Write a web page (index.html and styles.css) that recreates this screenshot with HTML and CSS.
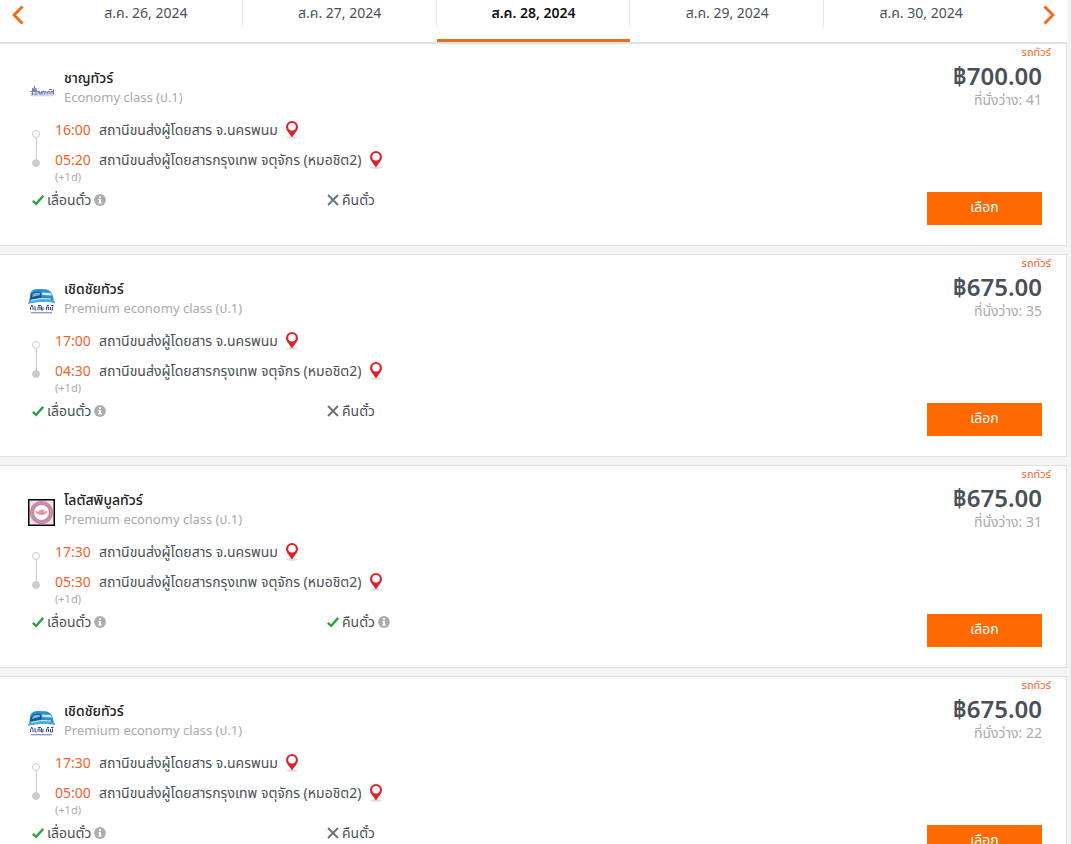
FILE: index.html
```html
<!DOCTYPE html>
<html lang="th">
<head>
<meta charset="utf-8">
<meta name="viewport" content="width=device-width, initial-scale=1">
<title>เที่ยวรถทัวร์</title>
<link rel="stylesheet" href="styles.css">
</head>
<body>
<svg class="sprite" aria-hidden="true">
  <symbol id="pin" viewBox="0 0 14 20">
    <ellipse cx="7" cy="17.500" rx="6" ry="1.500" fill="#e2e2e2"/>
    <path d="M7 1a6 6 0 0 0-6 6c0 3.600 4 7 6 10.500C9 14 13 10.600 13 7a6 6 0 0 0-6-6Z" fill="#de222c"/>
    <circle cx="7" cy="6.800" r="3.800" fill="#fff"/>
  </symbol>
  <symbol id="check" viewBox="0 0 12 12"><path d="M.8 6.800 4.200 9.800 11.200 1.800" fill="none" stroke="#2f9e44" stroke-width="2.300"/></symbol>
  <symbol id="cross" viewBox="0 0 12 12"><path d="M1 1 11 11M11 1 1 11" fill="none" stroke="#6c757d" stroke-width="2"/></symbol>
  <symbol id="info" viewBox="0 0 12 12"><circle cx="6" cy="6" r="5.900" fill="#adadad"/><path d="M5 2.300h2v1.700H5zM4.300 5H7v3.500h.8v1H4.200v-1H5V6h-.7z" fill="#fff"/></symbol>
  <symbol id="logo-charn" viewBox="0 0 27 27">
    <path d="M6.500 7.500 7.300 11l2 3H3.700l2-3Z" fill="#8585c4"/>
    <path d="M2 14.500h8M3 17h6M4.500 11v7M8 11v7" stroke="#7373b8" stroke-width=".9"/>
    <path d="M9.500 17.500 11 14l1 3.500 1.500-3 .5 3v-3h2v3M17 17.500v-3l2 .5v2.500M20 17.500V14l2 1v2.500M23 17.500v-3h2v3M21 12.500h3M25.500 12.500v5" fill="none" stroke="#6161ad" stroke-width=".9"/>
    <path d="M2 18.700h24" stroke="#c3c3e2" stroke-width=".9"/>
  </symbol>
  <symbol id="logo-cherd" viewBox="0 0 27 27">
    <path d="M2 7C2.500 3 5 1.500 9 1l8 .300c5 .700 6.500 3 7.500 6l1.500 5.500L1 15Z" fill="#2b8fcd"/>
    <path d="M3 7.500C4 4 8 3.500 12.500 4l1 5.500L2 11.500Z" fill="#17548f"/>
    <path d="M5 6q3-2 7-1v2L4 9Z" fill="#6fb7df"/>
    <path d="M14 4.500 22.500 5l1.500 2.500-9.500-.500Z" fill="#d0effc"/>
    <path d="M0 14.500q9-5.500 27-1.500v2q-16-3-27 1Z" fill="#45aede"/>
    <path d="M3 12.500q9-3 20-1.500" fill="none" stroke="#e6f7ff"/>
    <path d="M2.500 22v-3q1.500-2 2.500 0v3M7 18v4h1.500M10 22v-3h2v3M13.500 18v4h1.500v-3M18.500 22v-3h2v3M22.500 19v3h2v-3.500M3 17.500h1.500M10 17.500h3M19 17.500h2M23 17.500h2.500" fill="none" stroke="#3d4c98"/>
    <path d="M3 24.700h21" stroke="#8594c1" stroke-width="1.300"/>
  </symbol>
  <symbol id="logo-lotus" viewBox="0 0 27 27">
    <path d="M.750.750h25.500v25.500H.750Z" fill="#f1e3ea" stroke="#050505" stroke-width="1.500"/>
    <circle cx="13.500" cy="13.500" r="9.500" fill="#fff" stroke="#c884a6" stroke-width="4"/>
    <circle cx="13.500" cy="13.500" r="9.500" fill="none" stroke="#d794b0" stroke-width="1.500" stroke-dasharray="2 1"/>
    <path d="M7.500 12q2 0 3 1 .500-2 1.500-2.500.500.500 1 1 .500-1.500 1-2 .500.500 1 2 .500-.500 1-1 .500.500.500 2.500 1-1 3-1-1 4-6 4t-6-4Z" fill="#ec91a5"/>
  </symbol>
</svg>
<main class="page">
  <nav class="dates" aria-label="วันเดินทาง">
    <button class="arrow" type="button" aria-label="ก่อนหน้า"><svg viewBox="0 0 12 20"><path d="M10.500 1.500 2 10l8.500 8.500"/></svg></button>
    <div class="tabs">
      <button class="tab" type="button">ส.ค. 26, 2024</button>
      <button class="tab" type="button">ส.ค. 27, 2024</button>
      <button class="tab active" type="button" aria-current="date">ส.ค. 28, 2024</button>
      <button class="tab" type="button">ส.ค. 29, 2024</button>
      <button class="tab" type="button">ส.ค. 30, 2024</button>
    </div>
    <button class="arrow" type="button" aria-label="ถัดไป"><svg viewBox="0 0 12 20"><path d="M1.500 1.500 10 10l-8.500 8.500"/></svg></button>
  </nav>
  <div class="trips" id="trips"></div>
</main>
<script src="trips.js"></script>
</body>
</html>
```
FILE: trips.js
```js
const trips = [
  { logo: 'charn', name: 'ชาญทัวร์', cls: 'Economy class (ป.1)', dep: '16:00', arr: '05:20', price: '700.00', seats: 41, refund: false },
  { logo: 'cherd', name: 'เชิดชัยทัวร์', cls: 'Premium economy class (ป.1)', dep: '17:00', arr: '04:30', price: '675.00', seats: 35, refund: false },
  { logo: 'lotus', name: 'โลตัสพิบูลทัวร์', cls: 'Premium economy class (ป.1)', dep: '17:30', arr: '05:30', price: '675.00', seats: 31, refund: true },
  { logo: 'cherd', name: 'เชิดชัยทัวร์', cls: 'Premium economy class (ป.1)', dep: '17:30', arr: '05:00', price: '675.00', seats: 22, refund: false }
];

const icon = (id, cls) => `<svg class="${cls}" aria-hidden="true"><use href="#${id}"/></svg>`;
const info = `<button class="info" type="button" aria-label="ข้อมูล">${icon('info', 'mark')}</button>`;
const pin = `<button class="map" type="button" aria-label="แผนที่">${icon('pin', 'pin')}</button>`;

document.getElementById('trips').innerHTML = trips.map(t => `
  <article class="trip">
    <div class="details">
      <header class="operator">
        ${icon('logo-' + t.logo, 'logo')}
        <div><h2 class="name">${t.name}</h2><p class="class">${t.cls}</p></div>
      </header>
      <div class="route">
        <div class="rail"><i class="dot"></i><i class="line"></i><i class="dot end"></i></div>
        <div class="stops">
          <div class="stop"><time class="time">${t.dep}</time><span>สถานีขนส่งผู้โดยสาร จ.นครพนม</span>${pin}</div>
          <div class="stop"><time class="time">${t.arr}</time><span>สถานีขนส่งผู้โดยสารกรุงเทพ จตุจักร (หมอชิต2)</span>${pin}</div>
          <div class="next-day">(+1d)</div>
        </div>
      </div>
      <div class="policies">
        <div class="policy">${icon('check', 'mark')}<span>เลื่อนตั๋ว</span>${info}</div>
        <div class="policy">${icon(t.refund ? 'check' : 'cross', 'mark')}<span>คืนตั๋ว</span>${t.refund ? info : ''}</div>
      </div>
    </div>
    <div class="booking">
      <div class="type">รถทัวร์</div>
      <div class="price">฿${t.price}</div>
      <div class="seats">ที่นั่งว่าง: ${t.seats}</div>
      <button class="select" type="button">เลือก</button>
    </div>
  </article>`).join('');
```
FILE: styles.css
```css
* { box-sizing: border-box; }
body {
  margin: 0;
  background: #f4f4f4;
  color: #495057;
  font: 14px/20px "Noto Sans", "Noto Sans Thai", "Open Sans", sans-serif;
}
button { margin: 0; padding: 0; border: 0; background: none; color: inherit; font: inherit; cursor: pointer; }
h2, p { margin: 0; }
.sprite { position: absolute; width: 0; height: 0; }
.page { height: 100vh; overflow: hidden; padding-right: 4px; }

.dates { display: flex; height: 44px; background: #fff; border-bottom: 2px solid #e0e0e0; }
.arrow { flex: none; width: 49px; padding: 0 12px 12px; display: flex; align-items: center; }
.arrow:last-child { justify-content: flex-end; }
.arrow svg { width: 12px; height: 20px; fill: none; stroke: #f26a1b; stroke-width: 3; }
.tabs { flex: 1; display: flex; }
.tab { flex: 1; height: 42px; padding-bottom: 14px; border-bottom: 3px solid transparent; background: linear-gradient(#e9e9e9, #e9e9e9) right top / 1px 28px no-repeat; }
.tab:last-child { background: none; }
.tab.active { color: #111; font-weight: 600; border-bottom-color: #ea6f18; }

.trips { display: flex; flex-direction: column; gap: 8px; }
.trip { display: flex; justify-content: space-between; padding-left: 28px; background: #fff; border: 1px solid #e0e0e0; border-left: 0; min-height: 203px; }
.trips .trip:first-child { border-top: 0; min-height: 202px; }
.details { flex: 1; padding-top: 24px; }
.operator { display: flex; align-items: center; gap: 9px; padding-bottom: 9px; }
.logo { width: 27px; height: 27px; margin-top: 6px; }
.name { color: #222; font-size: 14px; line-height: 20px; font-weight: 500; }
.class { color: #aaa; font-size: 13px; line-height: 18px; }
.route { display: flex; gap: 15px; padding-left: 4px; }
.rail { display: flex; flex-direction: column; align-items: center; width: 8px; padding-top: 15px; }
.dot { width: 8px; height: 8px; border: 1px solid #ccc; border-radius: 50%; }
.dot.end { background: #ccc; }
.line { width: 1px; height: 21px; background: #ccc; }
.stop { display: flex; align-items: center; height: 30px; gap: 7px; }
.time { color: #f0622d; width: 37px; }
.map { display: flex; }
.pin { width: 14px; height: 20px; }
.next-day { color: #aaa; font-size: 11px; line-height: 14px; margin-top: -5px; }
.policies { display: flex; padding: 6px 0 0 4px; }
.policy { display: flex; align-items: center; gap: 3px; width: 295px; }
.mark { display: block; width: 12px; height: 12px; }

.booking { display: flex; flex-direction: column; align-items: flex-end; padding-right: 24px; }
.type { margin-right: -9px; color: #f0622d; font-size: 11px; line-height: 16px; }
.price { font-size: 24px; line-height: 32px; font-weight: 600; }
.seats { color: #aaa; line-height: 16px; }
.select { width: 115px; height: 33px; padding-bottom: 3px; margin-top: 84px; background: #ff6900; color: #fff; }
```
